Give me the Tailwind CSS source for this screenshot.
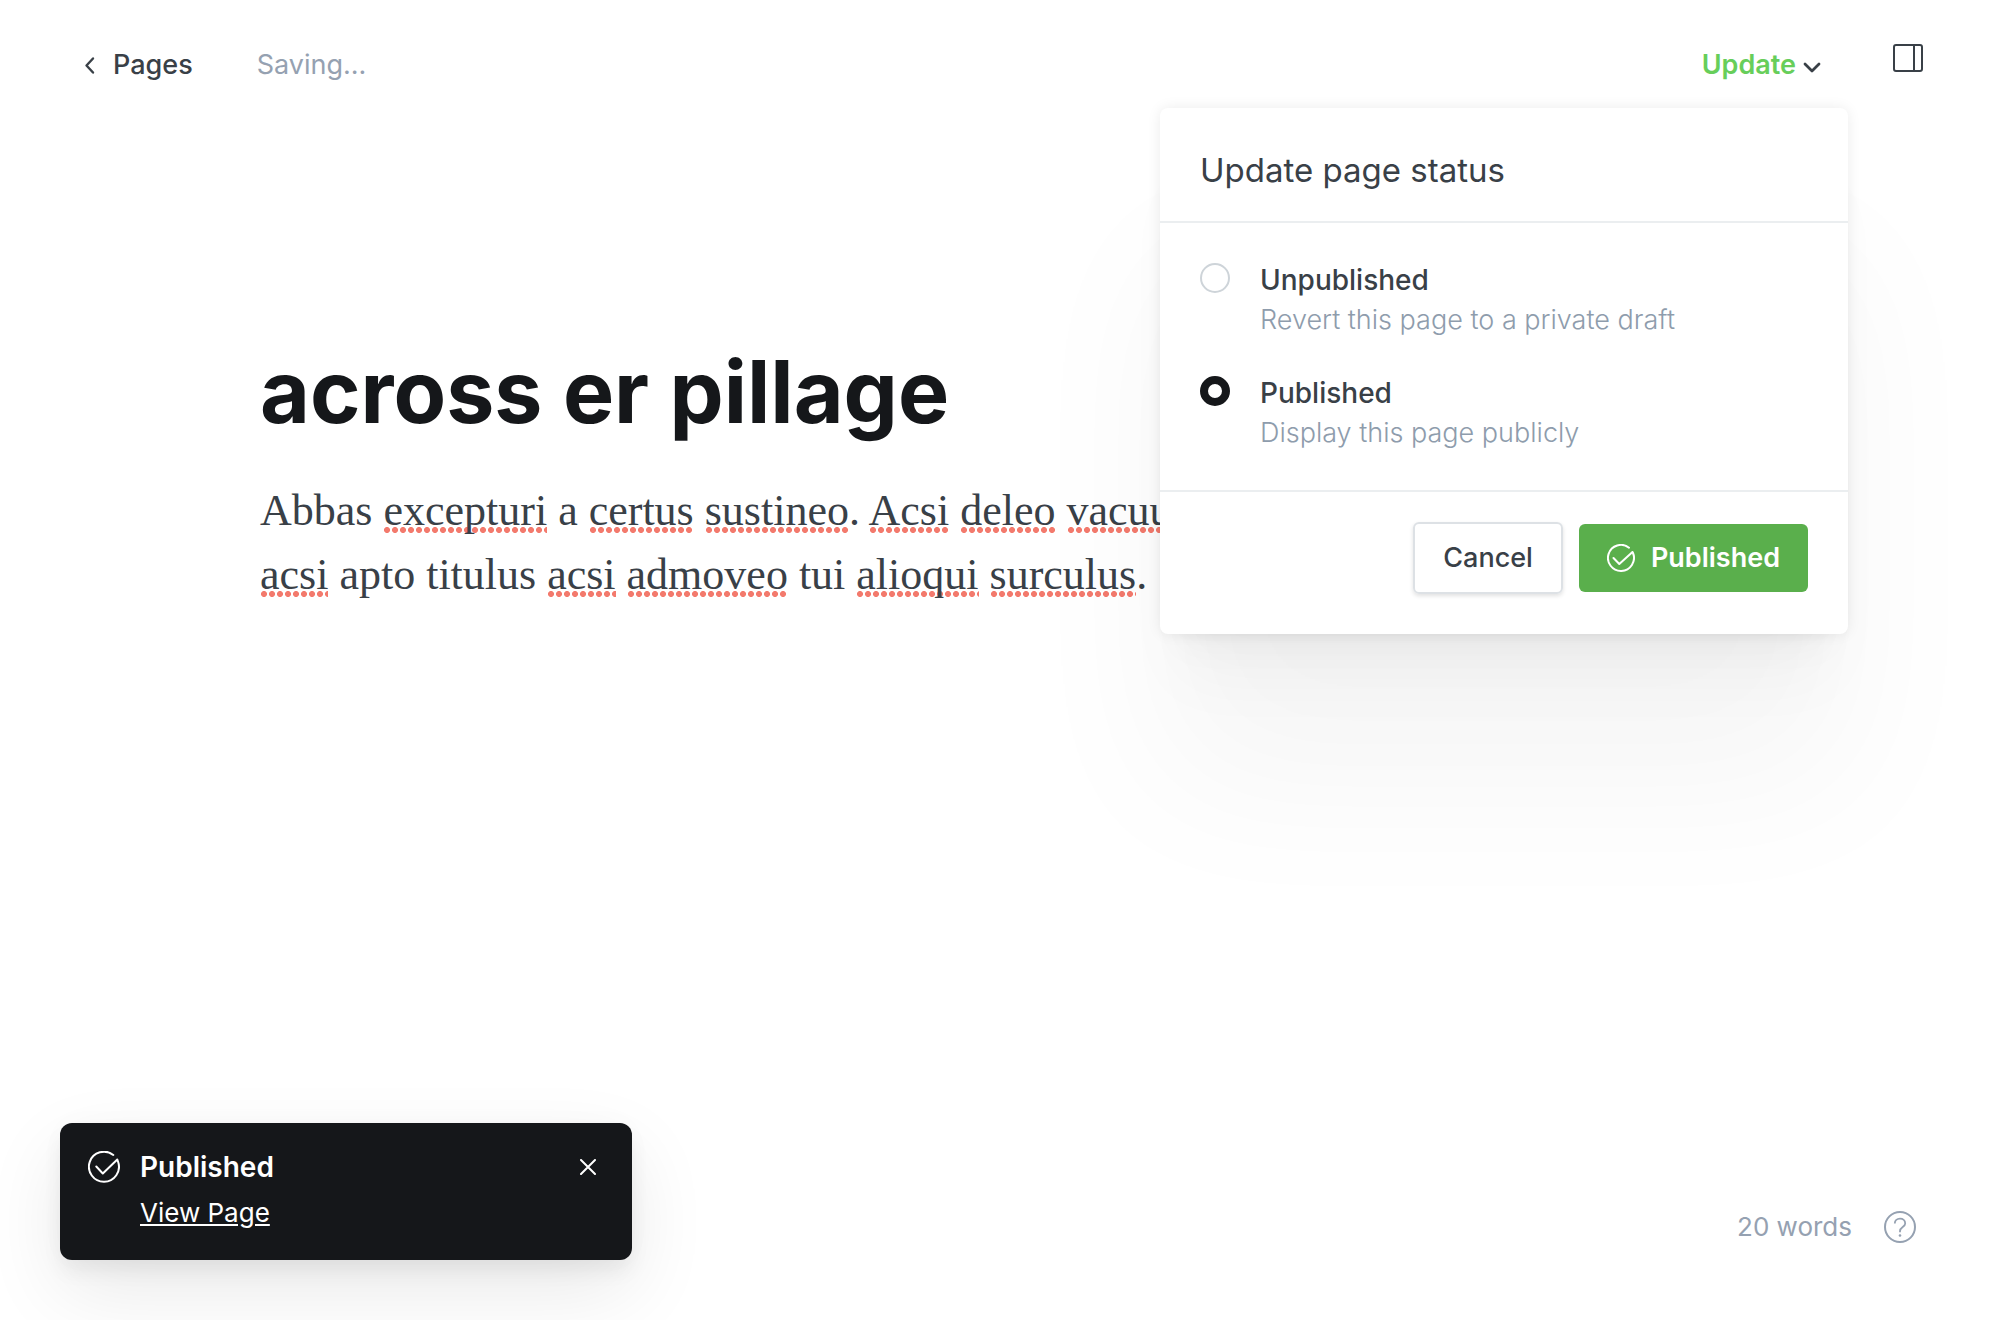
<!DOCTYPE html>
<html lang="en">
<head>
<meta charset="utf-8">
<title>Page editor</title>
<script src="https://cdn.jsdelivr.net/npm/@tailwindcss/browser@4"></script>
</head>
<body class="flex min-h-screen flex-col bg-white font-['Inter',sans-serif] text-[#394047]">
  <header class="flex items-center px-[76px] pt-[42px]">
    <a href="#" class="flex items-center text-[27px] leading-[44px] font-medium">
      <svg class="mr-[13px] h-6 w-6" viewBox="0 0 24 24" fill="none" stroke="currentColor" stroke-width="2.4" stroke-linecap="round" stroke-linejoin="round"><path d="M17 5.500 10.500 12.500 17 19.500"/></svg>
      Pages
    </a>
    <span class="ml-16 text-[27px] leading-[44px] text-[#95a1b1]">Saving...</span>
    <div class="relative ml-auto">
      <button type="button" class="flex items-center text-[27px] leading-[44px] font-semibold text-[#67ce5a]">
        Update
        <svg class="ml-1.5 h-5 w-5 text-[#394047]" viewBox="0 0 20 20" fill="none" stroke="currentColor" stroke-width="2.800" stroke-linecap="round" stroke-linejoin="round"><path d="M3 9 10 16 17 9"/></svg>
      </button>
      <section class="absolute top-[65px] -right-[26px] z-10 w-[688px] rounded-lg bg-white shadow-[0_0_14px_rgba(0,0,0,0.08),0_10px_10px_-20px_rgba(0,0,0,0.015),0_19px_19px_-20px_rgba(0,0,0,0.02),0_34px_34px_-20px_rgba(0,0,0,0.03),0_64px_64px_-20px_rgba(0,0,0,0.03),0_152px_160px_0_rgba(0,0,0,0.04)]">
        <h2 class="border-b-2 border-[#ebeef0] px-10 pt-10 pb-[29px] text-[33px] leading-[44px]">Update page status</h2>
        <div class="flex flex-col gap-[34px] px-10 pt-9 pb-[39px]">
          <label class="flex gap-[30px]">
            <input type="radio" name="status" class="mt-1 h-[30px] w-[30px] shrink-0 appearance-none rounded-full border-2 border-[#ced4d9] checked:border-[8px] checked:border-[#15171a]">
            <span class="flex flex-col">
              <span class="text-[28px] leading-[42px] font-medium">Unpublished</span>
              <span class="text-[27px] leading-[37px] font-light text-[#8e9cac]">Revert this page to a private draft</span>
            </span>
          </label>
          <label class="flex gap-[30px]">
            <input type="radio" name="status" checked class="mt-1 h-[30px] w-[30px] shrink-0 appearance-none rounded-full border-2 border-[#ced4d9] checked:border-[8px] checked:border-[#15171a]">
            <span class="flex flex-col">
              <span class="text-[28px] leading-[42px] font-medium">Published</span>
              <span class="text-[27px] leading-[37px] font-light text-[#8e9cac]">Display this page publicly</span>
            </span>
          </label>
        </div>
        <footer class="flex items-center justify-end gap-4 border-t-2 border-[#ebeef0] px-10 pt-[30px] pb-10">
          <button type="button" class="h-[72px] rounded-md border-2 border-[#dde1e5] px-7 text-[27px] font-medium shadow-[0_2px_4px_rgba(0,0,0,0.12)]">Cancel</button>
          <button type="button" class="flex h-[68px] items-center gap-4 rounded-md bg-[#5aaf4c] px-7 text-[27px] font-semibold text-white">
            <svg class="h-7 w-7" viewBox="0 0 28 28" fill="none" stroke="currentColor" stroke-width="2" stroke-linecap="round" stroke-linejoin="round"><path d="M22 3.700A13 13 0 1 0 26 9L25.500 8 12.300 20 6.500 14"/></svg>
            Published
          </button>
        </footer>
      </section>
    </div>
    <button type="button" aria-label="Toggle settings" class="mb-3.5 ml-[70px] h-8 w-8">
      <svg class="h-8 w-8" viewBox="0 0 32 32" fill="none" stroke="currentColor" stroke-width="2"><rect x="2" y="3" width="28" height="26" rx="2"/><path d="M22 3v26"/></svg>
    </button>
  </header>

  <main class="flex-1 px-[260px] pt-[249px]">
    <h1 class="text-[86px] leading-[110px] font-bold text-[#15171a]">across er pillage</h1>
    <p class="mt-8 font-['Liberation_Serif',serif] text-[44px] leading-[64px] whitespace-nowrap">
      Abbas
      <span class="bg-[radial-gradient(circle_at_center,#f37a6d_2.6px,transparent_3.4px)] bg-[length:8px_6px] bg-position-[left_bottom_2px] bg-repeat-x">excepturi</span>
      a
      <span class="bg-[radial-gradient(circle_at_center,#f37a6d_2.6px,transparent_3.4px)] bg-[length:8px_6px] bg-position-[left_bottom_2px] bg-repeat-x">certus</span>
      <span class="bg-[radial-gradient(circle_at_center,#f37a6d_2.6px,transparent_3.4px)] bg-[length:8px_6px] bg-position-[left_bottom_2px] bg-repeat-x">sustineo</span>.
      <span class="bg-[radial-gradient(circle_at_center,#f37a6d_2.6px,transparent_3.4px)] bg-[length:8px_6px] bg-position-[left_bottom_2px] bg-repeat-x">Acsi</span>
      <span class="bg-[radial-gradient(circle_at_center,#f37a6d_2.6px,transparent_3.4px)] bg-[length:8px_6px] bg-position-[left_bottom_2px] bg-repeat-x">deleo</span>
      <span class="bg-[radial-gradient(circle_at_center,#f37a6d_2.6px,transparent_3.4px)] bg-[length:8px_6px] bg-position-[left_bottom_2px] bg-repeat-x">vacuus</span><br>
      <span class="bg-[radial-gradient(circle_at_center,#f37a6d_2.6px,transparent_3.4px)] bg-[length:8px_6px] bg-position-[left_bottom_2px] bg-repeat-x">acsi</span>
      apto titulus
      <span class="bg-[radial-gradient(circle_at_center,#f37a6d_2.6px,transparent_3.4px)] bg-[length:8px_6px] bg-position-[left_bottom_2px] bg-repeat-x">acsi</span>
      <span class="bg-[radial-gradient(circle_at_center,#f37a6d_2.6px,transparent_3.4px)] bg-[length:8px_6px] bg-position-[left_bottom_2px] bg-repeat-x">admoveo</span>
      tui
      <span class="bg-[radial-gradient(circle_at_center,#f37a6d_2.6px,transparent_3.4px)] bg-[length:8px_6px] bg-position-[left_bottom_2px] bg-repeat-x">alioqui</span>
      <span class="bg-[radial-gradient(circle_at_center,#f37a6d_2.6px,transparent_3.4px)] bg-[length:8px_6px] bg-position-[left_bottom_2px] bg-repeat-x">surculus</span>.
    </p>
  </main>

  <footer class="flex items-end justify-between px-[60px] pb-[60px]">
    <div role="status" class="flex h-[137px] w-[572px] items-start rounded-xl bg-[#15171a] px-7 pt-6 text-white shadow-[0_0_30px_rgba(0,0,0,0.02),0_12px_20px_rgba(0,0,0,0.05),0_30px_80px_rgba(0,0,0,0.09)]">
      <svg class="mt-1 mr-5 h-8 w-8" viewBox="0 0 32 32" fill="none" stroke="currentColor" stroke-width="2" stroke-linecap="round" stroke-linejoin="round"><path d="M25.300 4A15 15 0 1 0 30 10.500L29.300 8.500 14.800 22.500 8.300 15.500"/></svg>
      <div class="flex flex-col items-start">
        <strong class="text-[28px] leading-10 font-semibold">Published</strong>
        <a href="#" class="text-[26px] leading-[52px] underline">View Page</a>
      </div>
      <button type="button" aria-label="Close" class="mt-3 mr-2 ml-auto h-4 w-4">
        <svg class="h-4 w-4" viewBox="0 0 16 16" fill="none" stroke="currentColor" stroke-width="2" stroke-linecap="round"><path d="M1 1 15 15M15 1 1 15"/></svg>
      </button>
    </div>
    <div class="flex items-center gap-8 pr-6 pb-3.5 text-[26px] text-[#95a1b1]">20 words
      <a href="#" aria-label="Help">
        <svg class="h-8 w-8" viewBox="0 0 32 32" fill="none" stroke="currentColor" stroke-width="2"><circle cx="16" cy="16" r="15"/><path stroke-width="1.800" d="M10.800 12.500c0-3 2.300-4.800 5.200-4.800s5.200 1.800 5.200 4.700c0 3.600-5.200 3.600-5.200 7.600v1.200"/><circle cx="16" cy="24.500" r="1.300" fill="currentColor" stroke="none"/></svg>
      </a>
    </div>
  </footer>
</body>
</html>
